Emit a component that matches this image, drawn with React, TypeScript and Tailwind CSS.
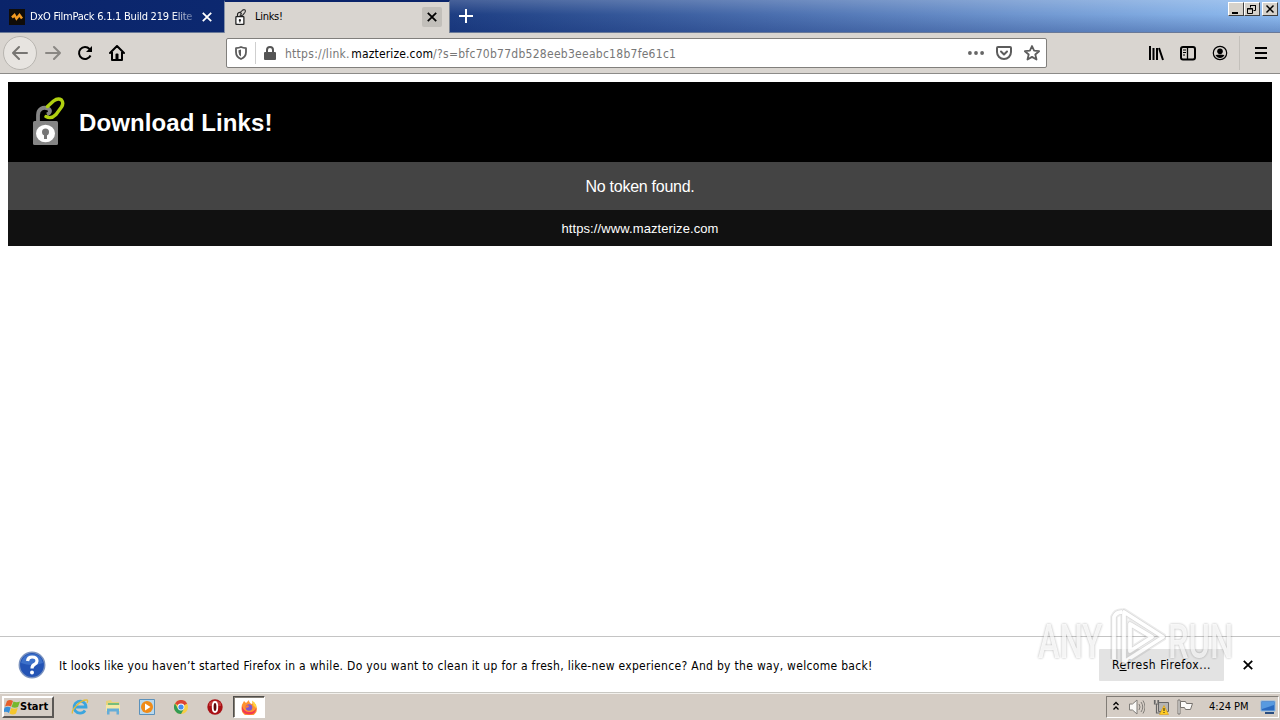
import type { ReactNode } from "react";

const ui = "font-['DejaVu_Sans_Condensed','DejaVu_Sans',sans-serif]";

function PadlockChain({ mono = false, className }: { mono?: boolean; className: string }) {
  const body = mono ? "#222" : "#858585";
  return (
    <svg className={className} viewBox="0 0 34 50" fill="none">
      <path d="M6 26V18C6 12 11 9.500 16 11.500 19 13 18.500 16 15 17.500" stroke={body} strokeWidth="3.800" />
      <path
        d="M15.500 9.500L21.500 4Q26 .5 29.500 3 32 6 29.500 10L24 17.500Q19 22.500 14 19.500"
        stroke={mono ? "#333" : "#b0d010"}
        strokeWidth="3.400"
        strokeLinecap="round"
        strokeLinejoin="round"
      />
      <rect x="1" y="24" width="25" height="24" rx="1.500" fill={mono ? "#fff" : body} stroke={body} strokeWidth={mono ? 4 : 0} />
      <ellipse cx="13.500" cy="36.500" rx="9.500" ry="8.700" fill="#fff" />
      <circle cx="13.500" cy="35" r="3.500" fill={mono ? "#222" : "#777"} />
      <path d="M12 36h3v6h-3z" fill={mono ? "#222" : "#777"} />
    </svg>
  );
}

function Cross({ className }: { className: string }) {
  return (
    <svg className={className} viewBox="0 0 10 10" fill="none" stroke="currentColor" strokeWidth="1.800">
      <path d="M.8.8l8.400 8.400M9.200.8L.8 9.200" />
    </svg>
  );
}

function WinButton({ children, wide = false }: { children: ReactNode; wide?: boolean }) {
  return (
    <div
      className={`flex h-[14px] items-center justify-center border border-t-white border-l-white border-r-[#404040] border-b-[#404040] bg-[#d6d2cb] ${wide ? "ml-[2px] w-4" : "w-4"}`}
    >
      <svg className="h-[11px] w-3" viewBox="0 0 12 11" fill="none" stroke="#000">
        {children}
      </svg>
    </div>
  );
}

function TabStrip() {
  return (
    <div className="flex h-[33px] border-b border-[#697998] bg-[linear-gradient(90deg,#0a246a_0%,#0d2a72_25%,#294b8e_42%,#4a6eae_60%,#7097d0_80%,#8fbcf0_100%)]">
      <div className="flex h-[32px] w-[224px] items-center pl-[9px] text-white">
        <svg className="mt-[2px] h-4 w-4 shrink-0" viewBox="0 0 16 16">
          <path d="M0 0h16v16H0z" fill="#100c08" />
          <path d="M3 8.500L5.500 6l2 3.500L10.500 6l2.500 3.500" fill="none" stroke="#f39a22" strokeWidth="2.500" />
        </svg>
        <div className="mt-[2px] ml-[5px] w-[165px] whitespace-nowrap text-[11px] leading-4 tracking-[-0.24px] [mask-image:linear-gradient(90deg,#000_86%,transparent_105%)]">
          DxO FilmPack 6.1.1 Build 219 Elite
        </div>
        <Cross className="mt-[2px] ml-[7px] h-[10px] w-[10px] shrink-0" />
      </div>
      <div className="flex h-[33px] w-[226px] shrink-0 items-center border-t-2 border-r border-l border-t-[#0a246a] border-r-[#7b8596] border-l-[#8591a8] bg-[#d9d5d0] pl-2">
        <PadlockChain mono className="mt-[-2px] h-4 w-4" />
        <div className="mt-[-1px] ml-[6px] w-[167px] text-[11px] leading-4 tracking-[-0.3px]">Links!</div>
        <div className="mt-[-2px] flex h-5 w-5 items-center justify-center rounded-[2px] bg-[#c2bfba]">
          <Cross className="h-[10px] w-[10px]" />
        </div>
      </div>
      <div className="flex flex-1 justify-between bg-[linear-gradient(180deg,rgba(255,255,255,0.18),rgba(10,36,106,0)_45%,rgba(10,36,106,0.28))]">
        <svg className="mt-[9px] ml-[9px] h-[14px] w-[14px]" viewBox="0 0 14 14" stroke="#fff" strokeWidth="2">
          <path d="M7 0v14M0 7h14" />
        </svg>
        <div className="mt-[2px] mr-[2px] flex">
          <WinButton><path d="M2 9h6" strokeWidth="2" /></WinButton>
          <WinButton>
            <path d="M4.500 3.500v-2h5v5h-2M4 1.500h6M1.500 4.500h5v5h-5zM1 5h6" />
          </WinButton>
          <WinButton wide><path d="M2.500 1.500l7 7M9.500 1.500l-7 7" strokeWidth="1.500" /></WinButton>
        </div>
      </div>
    </div>
  );
}

function Toolbar() {
  return (
    <div className="flex h-[41px] items-center border-b border-[#8c8b88] bg-[#d9d5d0] pl-[3px]">
      <div className="flex h-[34px] w-[34px] items-center justify-center rounded-full border border-[#b8b5b0] bg-[#e7e4e0]">
        <svg className="h-4 w-4" viewBox="0 0 16 16" fill="none" stroke="#777572" strokeWidth="2" strokeLinecap="round" strokeLinejoin="round">
          <path d="M15 8H1M7 2L1 8l6 6" />
        </svg>
      </div>
      <svg className="ml-2 h-4 w-4" viewBox="0 0 16 16" fill="none" stroke="#8a8783" strokeWidth="2" strokeLinecap="round" strokeLinejoin="round">
        <path d="M1 8h14M9 2l6 6-6 6" />
      </svg>
      <svg className="ml-4 h-4 w-4" viewBox="0 0 16 16" fill="none" stroke="#000" strokeWidth="2">
        <path d="M13.500 10.500A6 6 0 1 1 12.500 4L14 5.500" />
        <path d="M15 1v6H9z" fill="#000" stroke="none" />
      </svg>
      <svg className="ml-4 h-4 w-4" viewBox="0 0 16 16" fill="none" stroke="#000" strokeWidth="2" strokeLinejoin="round" strokeLinecap="round">
        <path d="M1 8l7-7 7 7M3 7v8h10V7" />
        <path d="M7.500 9.500h1V14h-1z" />
      </svg>
      <div className="ml-[101px] flex h-[30px] w-[821px] items-center rounded-[2px] border border-[#817f7c] bg-white pl-2">
        <svg className="h-[14px] w-3" viewBox="0 0 12 14" fill="none" stroke="#5c5c5c">
          <path d="M1 2.200Q4 2 6 1q2 1 5 1.200V6q0 5-5 7-5-2-5-7z" strokeWidth="1.800" strokeLinejoin="round" />
          <path d="M6 3.500v7Q3.500 9 3.500 6V4.300z" fill="#5c5c5c" stroke="none" />
        </svg>
        <div className="ml-2 h-[22px] w-px bg-[#cfcfcf]" />
        <svg className="ml-2 h-[14px] w-3" viewBox="0 0 12 14" fill="none" stroke="#555" strokeWidth="2">
          <path d="M3 7V4a3 3 0 0 1 6 0v3" />
          <rect x="0" y="6" width="12" height="8" rx="1" fill="#555" stroke="none" />
        </svg>
        <div className="mt-[2px] ml-[9px] w-[683px] text-[12px] leading-4 whitespace-nowrap text-[#777] tracking-[0.27px]">
          https://link.<span className="ml-[1.5px] tracking-[0.15px] text-black">mazterize.com</span>/?s=bfc70b77db528eeb3eeabc18b7fe61c1
        </div>
        <svg className="h-4 w-4 shrink-0" viewBox="0 0 16 16" fill="#666">
          <circle cx="1.900" cy="8" r="1.900" /><circle cx="8" cy="8" r="1.900" /><circle cx="14.100" cy="8" r="1.900" />
        </svg>
        <svg className="ml-3 h-4 w-4 shrink-0" viewBox="0 0 16 16" fill="none" stroke="#5c5c5c" strokeWidth="2" strokeLinecap="round" strokeLinejoin="round">
          <path d="M2 2h12q1 0 1 1v4a7 7 0 0 1-14 0V3q0-1 1-1zM5 6.500l3 3 3-3" />
        </svg>
        <svg className="ml-3 h-4 w-4 shrink-0" viewBox="0 0 16 16" fill="none" stroke="#5c5c5c" strokeWidth="1.800" strokeLinejoin="round">
          <path d="M8 1l2.100 4.700 5 .5-3.800 3.300 1.200 5L8 11.900l-4.500 2.600 1.200-5L.9 6.200l5-.5z" />
        </svg>
      </div>
      <svg className="ml-[101px] h-4 w-4" viewBox="0 0 16 16" fill="none" stroke="#000" strokeWidth="2">
        <path d="M2 1v14M5.500 3v12M9 3v12M11 3l4 12" />
      </svg>
      <svg className="ml-4 h-4 w-4" viewBox="0 0 16 16" fill="none" stroke="#000" strokeWidth="2">
        <rect x="1" y="2" width="14" height="12.500" rx="2" />
        <path d="M7.500 2v12" strokeWidth="1.300" /><path d="M3 5h3M3 7.500h3M3 10h2" strokeWidth="1" />
      </svg>
      <svg className="ml-4 h-4 w-4" viewBox="0 0 16 16" fill="none" stroke="#000">
        <circle cx="8" cy="8" r="6.700" strokeWidth="1.200" />
        <circle cx="8" cy="6.200" r="2.800" fill="#000" stroke="none" />
        <path d="M3.500 10Q8 9 12.500 10 11 13 8 13T3.500 10" fill="#000" stroke="none" />
      </svg>
      <div className="ml-[11px] h-[34px] w-px bg-[#c3c0bb]" />
      <svg className="ml-[15px] h-3 w-3" viewBox="0 0 12 12" stroke="#000" strokeWidth="2">
        <path d="M0 1h12M0 6h12M0 11h12" />
      </svg>
    </div>
  );
}

function Taskbar() {
  return (
    <div className="flex h-7 items-center border-t border-[#c9c8c3] bg-[#d5cdc5] pl-[2px] shadow-[inset_0_1px_#f3f1ed]">
      <div className="flex h-[22px] w-[52px] items-center border-2 border-t-white border-l-white border-r-[#5b5855] border-b-[#5b5855]">
        <svg className="h-4 w-4 shrink-0" viewBox="0 0 16 14">
          <path d="M3 1q3-2 6 0L7 6.500q-3-1.500-6 0z" fill="#e65f2b" />
          <path d="M9.500 1.500q3 1.500 6.500 0L14 7q-3 1.500-6.500 0z" fill="#76b82e" />
          <path d="M.7 7.500q3-1.500 6 0L5 13q-3-2-6-.5z" fill="#3990d9" />
          <path d="M7.200 8q3 1.500 6.500 0L12 13.500q-3 2-6.500 0z" fill="#f5c62c" />
        </svg>
        <span className="mt-px text-[11px] leading-4 font-bold">Start</span>
      </div>
      <svg className="ml-[17px] h-[18px] w-[18px]" viewBox="0 0 18 18" fill="none">
        <path d="M14 12.500A6 6 0 1 1 15 9H4" stroke="#3ba5de" strokeWidth="2.800" />
        <path d="M1.500 15.500C0 12 9 2 15.500 2q2 0 .5 3" stroke="#e3bd3a" strokeWidth="1.300" />
      </svg>
      <svg className="ml-4 h-4 w-4" viewBox="0 0 16 16">
        <path d="M1 2l5-1 1 2h7v9H1z" fill="#e7d27a" />
        <path d="M3 4h11v3H3z" fill="#76bd7b" />
        <path d="M1 6h14v6H1z" fill="#f5e8a4" />
        <path d="M2 15.500V9.500h12v6h-2.500v-3h-7v3z" fill="#65add8" />
      </svg>
      <svg className="ml-[18px] h-4 w-4" viewBox="0 0 16 16">
        <path d="M.5.5h15v15H.5z" fill="#b9d8ed" stroke="#5b91bb" />
        <circle cx="8" cy="8" r="6" fill="#f08b18" />
        <path d="M6 4.500v7L11.500 8z" fill="#fff" />
      </svg>
      <svg className="ml-[19px] h-[14px] w-[14px]" viewBox="0 0 14 14">
        <circle cx="7" cy="7" r="7" fill="#f7ce46" />
        <path d="M7 7L1 3.400a7 7 0 0 1 12.200.2z" fill="#dc4435" />
        <path d="M1 3.400A7 7 0 0 0 7 14l3-5.300H4z" fill="#329b54" />
        <circle cx="7" cy="7" r="3.400" fill="#fff" /><circle cx="7" cy="7" r="2.600" fill="#458eee" />
      </svg>
      <svg className="ml-[19px] h-4 w-4" viewBox="0 0 16 16">
        <circle cx="8" cy="8" r="7.700" fill="#a91015" />
        <path d="M2 4Q8-1 14 4v3H2z" fill="#d75b59" opacity=".6" />
        <ellipse cx="8" cy="8" rx="2.300" ry="5" fill="#5d080b" stroke="#fff" strokeWidth="1.800" />
      </svg>
      <div className="ml-[10px] flex h-[22px] w-8 items-center justify-center border border-t-[#504e4b] border-l-[#504e4b] border-r-white border-b-white bg-white shadow-[inset_1px_1px_#858077]">
        <svg className="h-4 w-4" viewBox="0 0 16 16">
          <path d="M3 2l2 2 3-3q0 3 3 4 1-1 0-3 5 3 5 8a7.500 7 0 0 1-15.500 0Q.5 5 3 2" fill="#ff9330" />
          <path d="M1 7q-1 8 7 8.500 7 0 7.500-7-2 5-7 4.500Q3 13 1 7" fill="#f23a52" />
          <path d="M11 1.500q5 3 4.500 8l-3-3z" fill="#ffd440" />
          <circle cx="8" cy="8.500" r="3.300" fill="#8058ce" />
          <path d="M4 7q4-2 4 1l-3 1z" fill="#ff7b35" />
        </svg>
      </div>
      <div className="mr-[1px] ml-auto flex h-[22px] w-[173px] items-center border border-t-[#817c76] border-l-[#817c76] border-r-white border-b-white pl-[6px]">
        <svg className="mt-[-2px] h-[10px] w-[6px]" viewBox="0 0 6 10" fill="none" stroke="#000" strokeWidth="1.300">
          <path d="M.5 4L3 1.500 5.500 4M.5 8.500L3 6l2.500 2.500" />
        </svg>
        <svg className="ml-[10px] h-4 w-4" viewBox="0 0 16 16" fill="none" stroke="#807d79">
          <path d="M.5 5h3L8 1v14l-4.500-4h-3z" fill="#faf9f7" />
          <path d="M10 5q2 3 0 6M12 3q3.500 5 0 10M14 1.500q4 6.500 0 13" />
        </svg>
        <svg className="ml-2 h-4 w-4" viewBox="0 0 16 16" fill="none">
          <path d="M5.500 3.500h10v9h-10z" fill="#b5b4b2" stroke="#666" />
          <path d="M1.500 1v4h4V1M3.500 5v9h5M2 1v3M5 1v3" stroke="#666" strokeWidth="1.200" />
          <path d="M11 6.500l4.500 9h-9z" fill="#ffcc23" stroke="#d99a16" strokeWidth=".6" />
          <path d="M11 9v3M11 13v1" stroke="#222" />
        </svg>
        <svg className="ml-2 h-4 w-4" viewBox="0 0 16 16" fill="#fcfbf9" stroke="#77736e">
          <path d="M3.500 2.500h5l1 2h6l-2 6h-5l-1-2h-4z" /><path d="M1 1h2v14H1z" />
        </svg>
        <span className="mt-px ml-[16px] w-[42px] text-[11px] leading-4 tracking-[-0.05px] whitespace-nowrap">4:24 PM</span>
        <svg className="ml-[9px] h-4 w-4 shrink-0" viewBox="0 0 16 16">
          <path d="M1 2h14v10H1z" fill="#2a6ac0" stroke="#8db9e2" />
          <path d="M2 3h12v3L2 10z" fill="#579ae0" /><path d="M5 14h9" stroke="#294d80" strokeWidth="2" />
        </svg>
      </div>
    </div>
  );
}

function Watermark() {
  const word =
    "origin-left font-['Roboto','Liberation_Sans',sans-serif] text-[48px] leading-[48px] font-medium text-white/85 [text-shadow:0_0_3px_rgba(0,0,0,0.4)]";
  const play = "M14 6Q8 6 6 11v42M16 6v50L55 31zM22 18v27l22-14z";
  return (
    <div className="pointer-events-none absolute top-[606px] left-[1034px] flex h-[66px] w-[204px] items-center opacity-80">
      <div className="mt-[6px] w-[74px] pl-1"><div className={`${word} scale-x-[0.68]`}>ANY</div></div>
      <svg className="h-[66px] w-[58px] shrink-0" viewBox="0 0 58 66" fill="none" strokeLinejoin="round">
        <path d={play} stroke="#000" strokeOpacity=".1" strokeWidth="7.500" />
        <path d={play} stroke="#ccc" strokeWidth="5" />
        <path d={play} stroke="#fff" strokeWidth="3.800" />
      </svg>
      <div className="mt-[6px] w-[68px] pl-[2px]"><div className={`${word} scale-x-[0.68]`}>RUN</div></div>
    </div>
  );
}

export default function App() {
  return (
    <div className={`relative flex h-[720px] w-[1280px] flex-col overflow-hidden bg-white text-black ${ui}`}>
      <TabStrip />
      <Toolbar />
      <main className="flex-1 px-2 pt-2 font-['Liberation_Sans',sans-serif] text-white">
        <header className="flex h-20 items-center bg-black pl-6">
          <PadlockChain className="mt-[-1px] h-[50px] w-[34px]" />
          <h1 className="mt-[2px] ml-[13px] text-[24px] leading-8 font-bold tracking-[0.1px]">Download Links!</h1>
        </header>
        <div className="flex h-12 items-center justify-center bg-[#444] pt-[2px] text-[16px] tracking-[-0.27px]">No token found.</div>
        <footer className="flex h-9 items-center justify-center bg-[#111] pt-[2px] text-[13px] tracking-[0.1px]">https://www.mazterize.com</footer>
      </main>
      <div className="flex h-14 items-center border-t border-[#c4c4c4] pl-[18px]">
        <svg className="h-7 w-7" viewBox="0 0 28 28" fill="none">
          <circle cx="14" cy="14" r="12.700" fill="#2454b5" stroke="#7b93bf" strokeWidth="1.500" />
          <path d="M3 12Q5 3 14 3t11 9Q14 16 3 12" fill="#3d71ca" />
          <path d="M9.500 10q.5-4 4.500-4 5 0 5 4 0 2-2.500 3.500-2.500 1-2.500 4" stroke="#fff" strokeWidth="3.200" />
          <circle cx="14" cy="21.500" r="2" fill="#fff" />
        </svg>
        <p className="mt-[2px] ml-[13px] w-[1040px] text-[12px] leading-4 tracking-[0.307px] whitespace-nowrap">
          It looks like you haven’t started Firefox in a while. Do you want to clean it up for a fresh, like-new experience? And by the way, welcome back!
        </p>
        <button className="h-8 w-[125px] shrink-0 rounded-[1px] bg-[#e3e3e3] text-[12px] leading-4 tracking-[0.5px]">
          R<span className="underline">e</span>fresh Firefox...
        </button>
        <Cross className="ml-[19px] h-[10px] w-[10px] shrink-0" />
      </div>
      <Taskbar />
      <Watermark />
    </div>
  );
}
